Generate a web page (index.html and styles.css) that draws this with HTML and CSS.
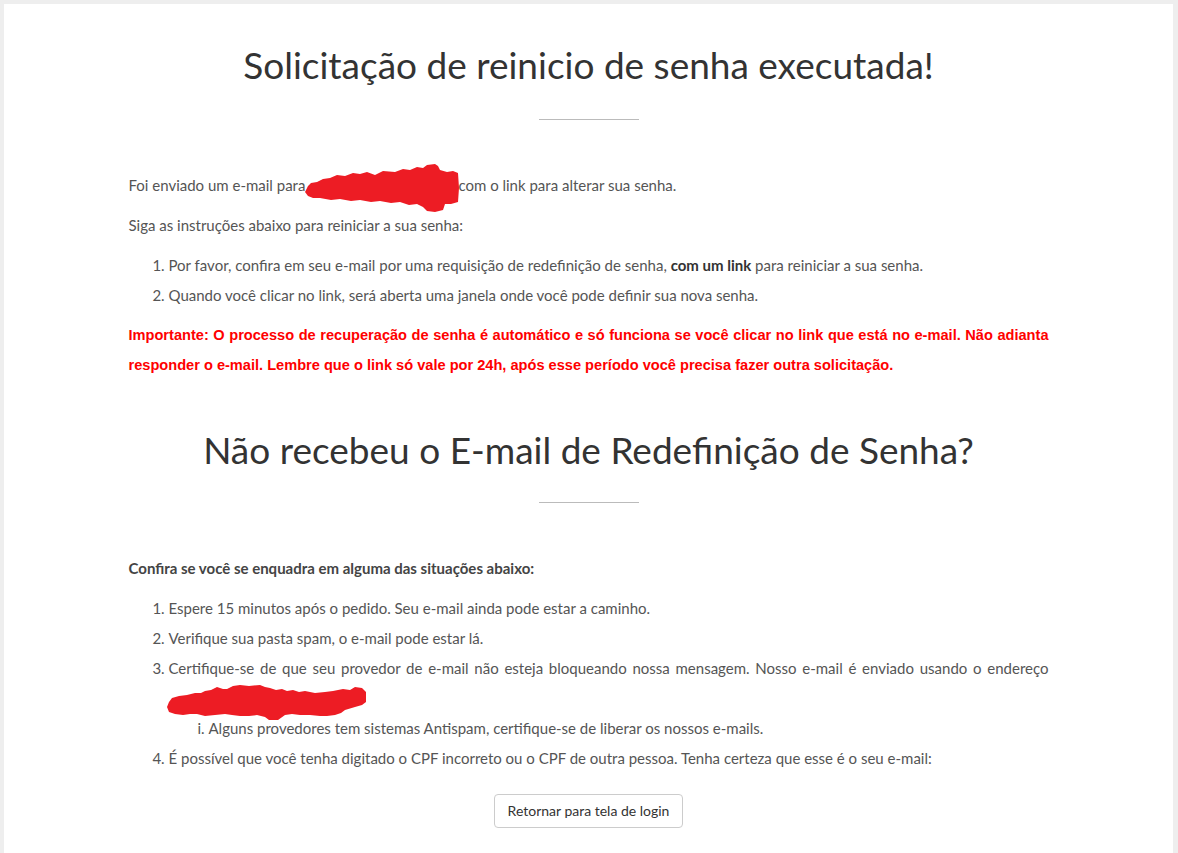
FILE: index.html
```html
<!DOCTYPE html>
<html lang="pt-BR">
<head>
<meta charset="utf-8">
<title>Solicitação de reinicio de senha executada!</title>
<link rel="stylesheet" href="styles.css">
</head>
<body>
<div class="card">
  <div class="container">
    <h1 class="title title-first">Solicitação de reinicio de senha executada!</h1>
    <hr class="divider divider-first">
    <p class="text">Foi enviado um e-mail para<span class="redact redact-a"><svg class="scribble scribble-a" width="155" height="49" viewBox="0 0 155 49"><path d="M0,28 L3,22 L6,19 L12,18 L18,15 L25,14 L32,11 L40,12 L48,9 L55,10 L62,8 L70,11 L78,7 L90,8 L98,5 L105,6 L112,3 L118,4 L122,1 L130,0 L133,2 L135,6 L142,8 L148,7 L153,9 L154,24 L153,38 L146,40 L140,40 L138,46 L130,48 L122,47 L118,43 L112,40 L104,41 L95,38 L86,39 L75,37 L66,38 L55,36 L46,37 L35,35 L26,36 L15,34 L8,34 L3,32 Z" fill="#ed1c24"/></svg></span>com o link para alterar sua senha.</p>
    <p class="text">Siga as instruções abaixo para reiniciar a sua senha:</p>
    <ol class="list">
      <li>Por favor, confira em seu e-mail por uma requisição de redefinição de senha, <strong>com um link</strong> para reiniciar a sua senha.</li>
      <li>Quando você clicar no link, será aberta uma janela onde você pode definir sua nova senha.</li>
    </ol>
    <p class="warning">Importante: O processo de recuperação de senha é automático e só funciona se você clicar no link que está no e-mail. Não adianta responder o e-mail. Lembre que o link só vale por 24h, após esse período você precisa fazer outra solicitação.</p>

    <h2 class="title title-second">Não recebeu o E-mail de Redefinição de Senha?</h2>
    <hr class="divider divider-second">
    <p class="text"><strong>Confira se você se enquadra em alguma das situações abaixo:</strong></p>
    <ol class="list">
      <li>Espere 15 minutos após o pedido. Seu e-mail ainda pode estar a caminho.</li>
      <li>Verifique sua pasta spam, o e-mail pode estar lá.</li>
      <li>Certifique-se de que seu provedor de e-mail não esteja bloqueando nossa mensagem. Nosso e-mail é enviado usando o endereço <span class="redact redact-b"><svg class="scribble scribble-b" width="203" height="38" viewBox="0 0 203 38"><path d="M2,22 L4,17 L7,13 L14,11 L22,10 L30,8 L36,8 L40,6 L46,5 L52,2 L58,4 L62,4 L68,1 L75,0 L84,1 L95,0 L100,2 L105,3 L111,5 L117,4 L122,6 L128,5 L134,7 L140,6 L150,8 L160,7 L168,6 L178,4 L185,5 L190,2 L197,3 L201,7 L201,17 L197,20 L190,22 L180,25 L176,28 L170,30 L162,31 L155,31 L145,30 L135,30 L127,29 L120,30 L113,35 L104,35 L100,32 L92,30 L84,31 L75,31 L67,30 L60,29 L50,30 L40,31 L32,29 L25,29 L18,30 L10,29 L4,27 Z" fill="#ed1c24"/></svg></span>
        <ol class="sublist">
          <li>Alguns provedores tem sistemas Antispam, certifique-se de liberar os nossos e-mails.</li>
        </ol>
      </li>
      <li>É possível que você tenha digitado o CPF incorreto ou o CPF de outra pessoa. Tenha certeza que esse é o seu e-mail:</li>
    </ol>
    <div class="actions">
      <button class="btn" type="button">Retornar para tela de login</button>
    </div>
  </div>
</div>
</body>
</html>
```

FILE: styles.css
```css
html, body {
  margin: 0;
  padding: 0;
}

body {
  background: #eeeeee;
  font-family: Lato, "Open Sans", sans-serif;
  color: #555555;
  padding: 4px 5px 0 4px;
  min-height: 849px;
}

.card {
  background: #ffffff;
  min-height: 849px;
  padding-top: 41px;
  box-sizing: border-box;
}

.container {
  width: 920px;
  margin: 0 auto;
}

.title {
  font-family: Lato, sans-serif;
  font-weight: 400;
  font-size: 37px;
  line-height: 1.1;
  color: #333333;
  text-align: center;
  margin: 0;
}

.title-second {
  margin-top: 50px;
}

.divider {
  width: 100px;
  height: 0;
  border: 0;
  border-top: 1px solid #bbbbbb;
  margin: 33px auto 50px;
}

.divider-second {
  margin-top: 32px;
}

.text {
  font-size: 15px;
  line-height: 30px;
  margin: 0 0 10px;
  text-align: justify;
}

.text strong {
  font-weight: 700;
  color: #444444;
}

.list {
  font-size: 15px;
  line-height: 30px;
  margin: 0 0 10px;
  padding-left: 40px;
  text-align: justify;
}

.list strong {
  font-weight: 700;
  color: #333333;
}

.sublist {
  list-style-type: lower-roman;
  margin: 0;
  padding-left: 40px;
}

.warning {
  font-family: "Liberation Sans", Arial, sans-serif;
  font-weight: 700;
  font-size: 14.6px;
  line-height: 30px;
  color: #ff0000;
  margin: 0 0 10px;
  text-align: justify;
}

.redact {
  display: inline-block;
  position: relative;
  height: 14px;
  vertical-align: baseline;
}

.redact-a {
  width: 153px;
}

.redact-b {
  width: 190px;
}

.scribble {
  position: absolute;
  display: block;
}

.scribble-a {
  left: 0;
  top: -13px;
}

.scribble-b {
  left: -4px;
  top: -5px;
}

.actions {
  display: flex;
  justify-content: center;
  margin-top: 21px;
}

.btn {
  font-family: Lato, sans-serif;
  font-size: 14px;
  color: #333333;
  background: #ffffff;
  border: 1px solid #cccccc;
  border-radius: 4px;
  height: 34px;
  padding: 0 13px;
  line-height: 20px;
  cursor: pointer;
}
```
